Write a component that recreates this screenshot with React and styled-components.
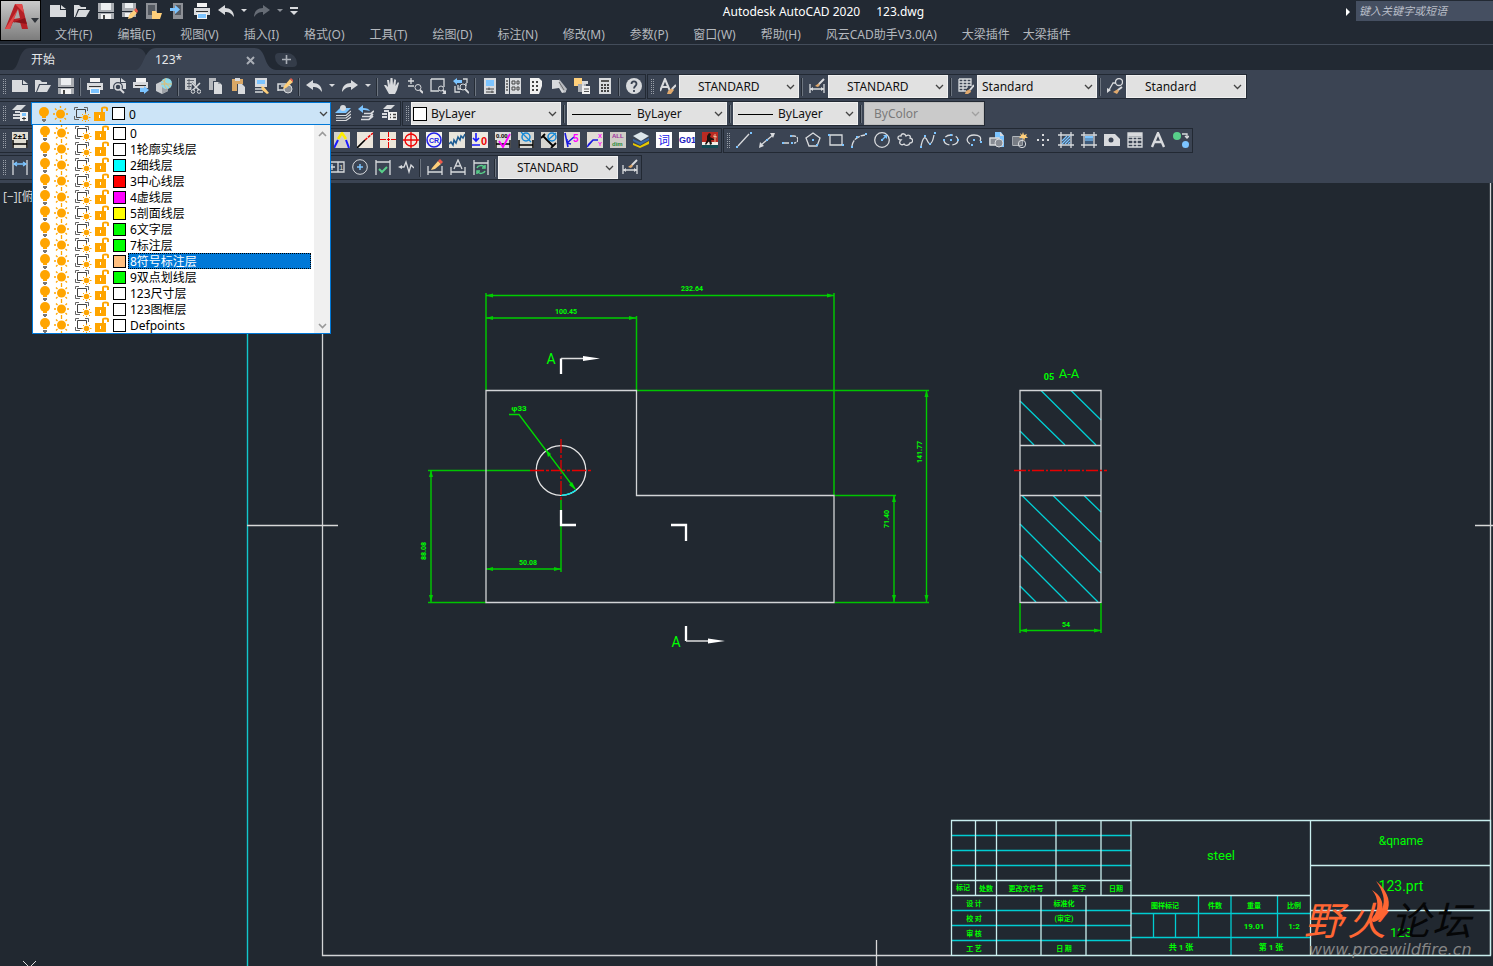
import React from "react";
import styled, { createGlobalStyle, css } from "styled-components";

const color = {
  chrome: "#222933",
  panel: "#3b4453",
  canvas: "#212830",
  field: "#e1e1e1",
  blue: "#0078d7",
  ink: "#d8dadd",
  sky: "#7cc4ff",
  amber: "#ffa500",
};

const GlobalStyle = createGlobalStyle`
  *, *::before, *::after { box-sizing: border-box; }
  body {
    margin: 0;
    background: ${color.canvas};
    font: 12px/16px "Noto Sans", "Noto Sans CJK SC", sans-serif;
    color: #fff;
    overflow-x: hidden;
  }
  button, input, select { font: inherit; color: inherit; margin: 0; }
`;

/* ---------- icon drawings, 16 x 16 ---------- */

const W = color.ink;
const B = color.sky;
const O = "#ffcf7a";
const D = color.panel;

const L = ({ d, c = W, w = 1.3, ...rest }) => (
  <path d={d} fill="none" stroke={c} strokeWidth={w} {...rest} />
);
const F = ({ d, c = W }) => <path d={d} fill={c} />;
const Dots = ({ at, c = B }) =>
  at.map(([x, y]) => <rect key={`${x}-${y}`} x={x} y={y} width="2" height="2" fill={c} />);

const icons = {
  new: <><F d="M0 2H10V7H16V14H0Z" /><F d="M11 2L16 6H11Z" /></>,
  open: <><F d="M0 2H5L7 4H12V6H4L1 14H0Z" /><F d="M5 7H16L12 14H2Z" /></>,
  save: <><F d="M0 0H16V16H0Z" c="#a9acb1" /><F d="M3 0H13V7H3Z" c="#eceef0" /><F d="M0 9H16V10H0Z" c="#222933" /><F d="M3 11H13V16H3Z" c="#f2f2f2" /><F d="M5 12H7V16H5Z" c="#444" /></>,
  saveAs: <><F d="M0 0H14V14H0Z" c="#a9acb1" /><F d="M3 0H11V5H3Z" c="#eceef0" /><F d="M0 8H14V9H0Z" c="#222933" /><F d="M3 10H8V14H3Z" c="#f2f2f2" /><F d="M7 12L12 7L15 10L10 15L6 16Z" c={O} /><F d="M12 7L14 5L16 8L15 10Z" c="#f0594a" /></>,
  mobileOpen: <><F d="M0 0H11V16H0Z" c="#8d9096" /><F d="M2 2H9V12H2Z" c="#555a62" /><F d="M6 8H10L11 10H16L14 16H6Z" c={O} /></>,
  mobileSave: <><F d="M3 0H13V16H3Z" c="#8d9096" /><F d="M5 2H11V12H5Z" c="#555a62" /><F d="M0 5H5V2L10 6.500L5 11V8H0Z" c={B} /></>,
  print: <><F d="M3 0H13V4H3Z" c="#f2f2f2" /><F d="M0 5H16V12H0Z" /><F d="M2 8H14V9H2Z" c="#333" /><F d="M3 10H13V16H3Z" c="#f2f2f2" /><F d="M4 11H12V15H4Z" c={B} /></>,
  undo: <F d="M0 7L7 2V5C12 5 16 8 16 14C13 10 11 9 7 9V12Z" />,
  redo: <F d="M16 7L9 2V5C4 5 0 8 0 14C3 10 5 9 9 9V12Z" />,
  redoOff: <F d="M16 7L9 2V5C4 5 0 8 0 14C3 10 5 9 9 9V12Z" c="#666c75" />,
  preview: <><F d="M0 0H10V5H16V11H0Z" /><F d="M11 0L16 4H11Z" /><circle cx="8" cy="9" r="4" fill={D} stroke={D} strokeWidth="2" /><circle cx="8" cy="9" r="3" fill={D} stroke={W} strokeWidth="1.500" /><L d="M10 11L14 15" w={2} /></>,
  publish: <><F d="M3 0H13V4H3Z" c="#f2f2f2" /><F d="M0 4H15V10H0Z" /><F d="M2 7H13V8H2Z" c="#333" /><F d="M7 10H11V8L16 12L11 16V14H7Z" c={B} /></>,
  globe: <><F d="M0 6L6 3L12 7V13L6 16L0 13Z" c="#c9ccd0" /><F d="M6 9L12 7V13L6 16Z" c="#9da1a7" /><circle cx="10.500" cy="5.500" r="5.500" fill="#8fd9e8" /><L d="M5 6H16M10 0C7 4 8 8 11 11M6 2C10 5 13 8 14 10" c="#e8b96a" w={0.9} /></>,
  cut: <><F d="M0 0H11V12H0Z" c="#c9ccd0" /><L d="M2 2.500H9M2 5.500H7M2 8.500H6M4 1V11" c="#555b66" w={0.9} /><F d="M7 4L16 12V16H6Z" c={D} /><L d="M7 5L14 12M15 5L8 12" w={1.600} /><circle cx="8" cy="13.500" r="1.800" fill="none" stroke={W} /><circle cx="14" cy="13.500" r="1.800" fill="none" stroke={W} /></>,
  copy: <><F d="M1 0H8V3H5V12H1Z" c="#b4b7bc" /><F d="M6 4H11L14 7V16H6Z" /><L d="M5 3.500H11V6" c={D} w={0.8} /></>,
  paste: <><F d="M1 1H12V6H6V13H1Z" c="#d9a766" /><F d="M4 0H9V3H4Z" /><F d="M7 6H11L14 9V16H7Z" /></>,
  match: <><F d="M1 0H13V9H1Z" /><F d="M3 2H11V6H3Z" c={B} /><L d="M1 11H8M1 14H9" /><F d="M7 8L10 9L15 15L13 16L8 12Z" c={O} /></>,
  blockEdit: <><L d="M1 13V6H9M1 12H8M4 8H8" w={1.500} /><circle cx="11" cy="11" r="4" fill="#888c93" stroke={W} /><F d="M7 8L13 1L16 4L9 10L6 11Z" c={O} /><F d="M13 1L14 0L16 2V4Z" c="#f0594a" /></>,
  pan: <F d="M5 16L1 9L0 7L2 7L4 9L3 2L5 2L6 7L6.500 0H8.500L9 7L10.500 1L12 2L11.500 8L14 4L15 5L13 12L11 16Z" />,
  zoomRt: <><L d="M1 3H7M4 0V6M1 8H7" /><circle cx="11" cy="9.500" r="3" fill="none" stroke={W} /><L d="M13 12L16 15" w={2} /></>,
  zoomWin: <><L d="M1 1H14V9M9 13H1V1" /><circle cx="11" cy="10.500" r="2.500" fill="none" stroke={W} /><L d="M13 12L15 15" w={2} /><F d="M12 16H16V12Z" /></>,
  zoomPrev: <><F d="M0 3L4 0V2H9V5H4V7Z" c={B} /><L d="M10 1H14V5M2 8V14H7M5 7V11H8M13 5V8" /><circle cx="10" cy="9" r="3" fill="none" stroke={W} /><L d="M12 11L16 15" w={1.800} /></>,
  props: <><F d="M2 0H14V16H2Z" /><F d="M4 2H12V8H4Z" c={B} /><L d="M4 11H12M4 14H12M7 9.500V12M10 12.500V15" c="#444" w={1} /></>,
  design: <><F d="M0 0H4V16H0ZM5 0H16V16H5Z" /><L d="M1 3H3M1 6H3M1 9H3M1 12H3" c="#555" /><L d="M7 3H10V6H7ZM12 3H14V6H12ZM7 9H10V12H7ZM12 9H14V12H12Z" c="#444" w={1} /></>,
  palettes: <><F d="M2 0H11L14 3V8L11 16H2Z" c="#f0f0f0" /><F d="M4 3H6V5H4ZM8 3H10V5H8ZM4 7H6V9H4ZM8 7H10V9H8ZM4 11H6V13H4ZM8 11H10V13H8Z" c="#444" /></>,
  sheetSet: <><F d="M1 2H8L15 12V14L11 15L8 10L1 11Z" /><F d="M8 1L16 11L14 15L9 9Z" c="#b8bbc0" /><L d="M8 4L13 12" c="#555" w={0.8} /></>,
  markup: <><F d="M0 0H8V8H0Z" c={O} /><F d="M4 6H12V14H4Z" c="#a9acb1" /><F d="M8 8H16V16H8Z" c="#f0f0f0" /><F d="M8 3H14V6H10V8H8Z" /><L d="M10 11H15M10 13.500H15" c="#555" w={1} /></>,
  calc: <><F d="M2 0H14V16H2Z" /><F d="M4 2H12V4H4Z" c="#555" /><F d="M4 6H6V8H4ZM7 6H9V8H7ZM10 6H12V8H10ZM4 9H6V11H4ZM7 9H9V11H7ZM10 9H12V11H10ZM4 12H6V14H4ZM7 12H9V14H7ZM10 12H12V14H10Z" c="#444" /></>,
  help: <><circle cx="8" cy="8" r="8" fill={W} /><L d="M5.500 6C5.500 2.500 10.500 2.500 10.500 6C10.500 8 8 8 8 10.500M8 12V14" c="#3b4453" w={1.800} /></>,
  textStyle: <><L d="M0 13L5 1L10 13M2 9H8" w={2} /><F d="M8 13L12 10L14 12L11 16H7Z" c="#e0a96d" /><L d="M12 11L16 7" w={2} /></>,
  dimStyle: <><L d="M1 6V15M15 6V15M1 11H15" /><F d="M1 11L4 9V13ZM15 11L12 9V13Z" /><F d="M6 8L10 5L11 7L9 9Z" c="#e0a96d" /><L d="M10 6L15 1" w={2} /></>,
  tableStyle: <><L d="M1 1H13V8M8 13H1V1M1 4H13M1 7H13M1 10H9M5 1V13M9 1V10" /><F d="M8 13L12 11L13 14L10 16H7Z" c="#e0a96d" /><L d="M12 12L16 7" w={2} /></>,
  leaderStyle: <><circle cx="12" cy="4" r="3.500" fill="none" stroke={W} strokeWidth="1.300" /><L d="M9 5L6 5L2 12" /><F d="M0 15V10L4 12Z" /><F d="M6 14L11 11L12 13L10 16Z" c="#e0a96d" /><L d="M11 12L15 9" w={2} /></>,
  layers: <><F d="M5 0H14L9 5H0Z" /><L d="M3 7H8M1 10H8M1 13H8" w={2} /><F d="M8 7H16V16H8Z" c="#f0f0f0" /><F d="M10 8H14V11H10Z" c={B} /><L d="M10 13.500H14M12 12V15.500" c="#333" w={1} /></>,
  makeCurrent: <><F d="M5 3H16L11 8H0Z" c={B} /><circle cx="8" cy="3" r="3" fill={W} /><L d="M1 10.500H11L16 6M1 13H11L16 9M1 15.500H11L16 12" w={1.200} /></>,
  layerPrev: <><F d="M0 4L5 0V3C9 3 11 4 12 6C9 5 7 5 5 5V8Z" c={B} /><L d="M6 8.500H13L16 6M4 11.500H12L15 9M3 14.500H11L15 11" w={1.700} /></>,
  layerStates: <><F d="M6 0H14L10 4H2Z" /><L d="M3 6H8M1 9H6M1 12H6" w={2} /><F d="M7 7H16V15H7Z" c="#f0f0f0" /><L d="M9 9.500H10M12 9.500H15M9 12.500H10M12 12.500H15" c="#444" /></>,
  // annotation plug-in
  tol: <><F d="M0 0H16V16H0Z" c="#e0ddd2" /><text x="1" y="7" fontSize="8" fontWeight="700" fill="#000">2±1</text><L d="M1 8V16M15 8V16M1 12H15" c="#000" w={1.500} /></>,
  vee: <><F d="M0 0H16V16H0Z" c="#d5d2c9" /><L d="M4 7L8 1L12 7" c="#ffee00" w={2.500} /><L d="M4 8L0 16M12 8L15 16" c="#1a1aff" w={2} /></>,
  diag: <><F d="M0 0H16V16H0Z" c="#ece6dc" /><L d="M0 16L8 8" c="#000" w={1.600} /><L d="M8 8L16 1" c="#e00" w={1.500} strokeDasharray="3 1" /></>,
  cross: <><F d="M0 0H16V16H0Z" c="#ece6d8" /><L d="M0 7.500H6M7 7.500H10M11 7.500H16M8.500 0V5M8.500 6V9M8.500 10V16" c="#e00" w={1} /></>,
  target: <><F d="M0 0H16V16H0Z" c="#f0e8de" /><circle cx="8" cy="8" r="6" fill="none" stroke="#e00" strokeWidth="1.300" /><L d="M0 8H16M8 0V16" c="#e00" w={1.300} /></>,
  cr: <><F d="M0 0H16V16H0Z" c="#f5f3f0" /><circle cx="8" cy="8" r="7" fill="none" stroke="#2222e8" strokeWidth="1.600" /><text x="8" y="11" fontSize="7" fontWeight="700" textAnchor="middle" fill="#2222e8">CR</text></>,
  wave: <><F d="M0 0H16V16H0Z" c="#e8e5dc" /><L d="M0 12L2 10L4 13L5 8L7 11L9 5L11 8L12 4L14 6L16 2" c="#1d5c93" w={1.500} /></>,
  datum: <><F d="M0 0H16V16H0Z" c="#ede9e0" /><L d="M4 1V9M1 6L4 9L7 6M0 13H8" c="#1a1aff" w={1.600} /><text x="9" y="13" fontSize="11" fontWeight="700" fill="#e00">0</text></>,
  rough: <><F d="M0 0H16V16H0Z" c="#ddd" /><text x="1" y="6" fontSize="6" fontWeight="700" fill="#000">0.00</text><L d="M1 8V16M15 8V16M1 12H15" c="#000" /><L d="M4 9L8 15L15 2" c="#f0f" w={1.800} /></>,
  dimDia: <><F d="M0 0H16V16H0Z" c="#d5d5d0" /><circle cx="8" cy="5" r="4" fill="none" stroke="#1689d8" strokeWidth="1.500" /><L d="M3 0L13 10" c="#1689d8" /><L d="M1 8V16M15 8V16M1 13H15" c="#000" w={1.500} /></>,
  dimAlign: <><F d="M0 0H16V16H0Z" c="#d5d5d0" /><circle cx="11" cy="5" r="4" fill="none" stroke="#1689d8" strokeWidth="1.500" /><L d="M2 4L12 14M0 6L4 2M10 16L15 11" c="#000" w={1.800} /><L d="M7 8L15 1" c="#1689d8" /></>,
  lead5: <><F d="M0 0H16V16H0Z" c="#e3dfd8" /><L d="M1 1L4 15M3 11L10 5M3 11V7M3 11L7 12" c="#1a1ae0" w={1.600} /><text x="9" y="10" fontSize="10" fontWeight="700" fill="#f0f">5</text></>,
  xy: <><F d="M0 0H16V16H0Z" c="#e0dcd4" /><L d="M0 15L6 8H11M1 13L6 8" c="#1a1ae0" w={1.500} /><text x="11" y="6" fontSize="6" fontWeight="700" fill="#f0f">X</text><text x="11" y="14" fontSize="6" fontWeight="700" fill="#f0f">Y</text></>,
  all: <><F d="M0 0H16V16H0Z" c="#cfccc6" /><text x="2" y="6" fontSize="6" fontWeight="700" fill="#a030a0">ALL</text><text x="2" y="14" fontSize="6" fontWeight="700" fill="#2a8a3a">dim</text></>,
  stack: <><F d="M0 11L7 14L16 9V12L7 16L0 13Z" c="#e8c800" /><F d="M0 7L7 10L16 6V8L7 13L0 9Z" c="#3c68a8" /><F d="M0 4L8 0L16 4L8 9Z" c="#dce5ea" /></>,
  word: <><F d="M0 0H16V16H0Z" c="#fff" /><text x="2" y="13" fontSize="12" fill="#2222e8">词</text></>,
  go1: <><F d="M0 0H16V16H0Z" c="#fff" /><text x="0" y="11" fontSize="9" fontWeight="700" fontFamily="Liberation Mono, monospace" fill="#2222c0">G01</text></>,
  pirate: <><F d="M0 0H16V16H0Z" c="#b92a22" /><F d="M0 10H16V13H0Z" c="#f0efe9" /><F d="M7 1L9 2L8 5L12 7L12 8L9 8L10 12L8 13L7 9L4 13L3 12L5 8L5 4Z" c="#19130f" /><F d="M0 13H16V16H0Z" c="#124c53" /><L d="M13 2V11M11 4L15 5" c="#f0d9b0" w={0.8} /></>,
  // drawing tools
  line: <><L d="M2 14L13 2" /><Dots at={[[0, 14], [14, 0]]} /></>,
  xline: <><L d="M2 13L14 3" /><F d="M11 1H16L14 6ZM1 10L5 14L0 16Z" /><Dots at={[[7, 7]]} /></>,
  pline: <><L d="M2 11H8M9 4H12C17 4 17 11 12 11" strokeDasharray="5 1" /><Dots at={[[0, 10], [9, 10], [8, 3]]} /></>,
  polygon: <><L d="M8 1L15 6L12 14H4L1 6Z" /><Dots at={[[7, 7], [11, 12]]} /></>,
  rect: <><L d="M2 3H14V13H2Z" /><Dots at={[[0, 2], [14, 12]]} /></>,
  arc: <><L d="M1 14C2 8 6 4 14 3" strokeDasharray="6 1" /><Dots at={[[0, 14], [5, 4], [14, 1]]} /></>,
  circle: <><circle cx="8" cy="8" r="7.300" fill="none" stroke={W} strokeWidth="1.300" /><L d="M8 8L12 4" c={B} /><F d="M9 3H13V7Z" c={B} /><Dots at={[[7, 7]]} /></>,
  cloud: <L d="M4 8C0 8 0 3 4 4C4 1 8 1 9 4C12 2 14 4 13 6C17 7 16 11 13 11C12 14 8 14 7 12C4 14 1 11 4 8Z" />,
  spline: <><L d="M1 14C3 5 5 4 7 8C9 13 12 14 14 3" /><Dots at={[[0, 14], [4, 3], [9, 11], [14, 0]]} /></>,
  ellipse: <><ellipse cx="8" cy="8" rx="7" ry="5" fill="none" stroke={W} strokeWidth="1.300" strokeDasharray="8 3" /><Dots at={[[0, 7], [14, 7], [7, 2], [7, 7]]} /></>,
  ellArc: <><L d="M4 12C-1 9 1 3 8 3C13 3 16 5 14 9" /><Dots at={[[7, 7], [14, 9], [5, 12]]} /></>,
  insert: <><F d="M6 0H12L15 4V15H8V7H6Z" c={B} /><F d="M0 6H10V13H0Z" c="#888c93" /><L d="M1 6H10V13H1Z" /><circle cx="10" cy="11" r="4" fill="#888c93" stroke={W} /><F d="M11 0L15 4H11Z" /></>,
  block: <><L d="M1 5H10V13H1Z" /><F d="M1 5H10V13H1Z" c="#777c84" /><circle cx="10" cy="12" r="3.700" fill="none" stroke={W} /><F d="M11 0L12 3L15 2L14 4L16 6L13 6L12 9L11 6L7 6L9 4L8 1L10 3Z" c={O} /></>,
  point: <Dots at={[[7, 2], [7, 7], [7, 12], [2, 7], [12, 7]]} c={W} />,
  hatch: <><L d="M0 3H16M0 13H16M3 0V16M13 0V16" /><L d="M4 9L9 4M4 12L12 4M7 12L12 7M10 12L12 10" c={B} /></>,
  gradient: <><F d="M4 4H12V12H4Z" c="#3f5a78" /><F d="M4 4H12V6H4Z" c={B} /><F d="M4 6H12V9H4Z" c="#6399c8" /><L d="M0 3H16M0 13H16M3 0V16M13 0V16" /></>,
  region: <><F d="M0 2H11L16 7V14H0Z" /><circle cx="7" cy="8" r="2.500" fill={D} /></>,
  table: <><L d="M1 1H15V15H1ZM1 5H15M1 8H15M1 12H15M6 5V15M10 5V15" /><F d="M1 1H15V4H1Z" /></>,
  mtext: <L d="M2 15L8 1L14 15M4 10H12" w={2.400} />,
  addSel: <><circle cx="4" cy="4" r="4" fill="#58d08a" /><circle cx="12.500" cy="12.500" r="3.500" fill={B} /><L d="M9 2H14V6M12 4L14 6L16 4" /></>,
  // dimension tools
  dimLin: <><L d="M1 1V16M15 1V16" /><L d="M2 5H14M5 3L2 5L5 7M11 3L14 5L11 7" c={B} /></>,
  tolerance: <><L d="M0 3H15V13H0M9 3V13M0 8H6M3 5V11" /><text x="10" y="11" fontSize="8" fill={W}>1</text></>,
  center: <><circle cx="8" cy="8" r="7.300" fill="none" stroke={W} /><L d="M8 5V11M5 8H11" c={B} w={1.500} /></>,
  inspect: <><L d="M1 1V16M15 1V16M1 3H15" /><L d="M4 10L7 13L12 8" c="#58d08a" w={2} /></>,
  jog: <><L d="M3 8H6L8 3L11 13L13 6L16 9" /><F d="M0 8L4 6V10Z" /></>,
  dimEdit: <><L d="M1 7V16M15 7V16M1 13H15" /><F d="M5 9L11 2L14 5L8 10L4 11Z" c={O} /><F d="M11 2L13 0L16 3L14 5Z" c="#f0594a" /></>,
  dimText: <L d="M1 8V16M15 8V16M1 13H15M4 10L8 1L12 10M6 7H10" />,
  dimUpdate: <><L d="M1 1V16M15 1V16M1 4H15" /><L d="M4 9C5 6 10 6 11 8M12 6V9H9M12 12C11 15 6 15 5 13M4 15V12H7" c="#58d08a" w={1.500} /></>,
};

const IconSvg = styled.svg`
  display: block;
  width: 16px;
  height: 16px;
  flex: none;
  text { font-family: "Liberation Sans", "Noto Sans CJK SC", sans-serif; }
`;

const Icon = ({ name }) => (
  <IconSvg viewBox="0 0 16 16" aria-hidden="true">{icons[name]}</IconSvg>
);

/* ---------- title bar ---------- */

const Header = styled.header`
  display: flex;
  height: 45px;
  background: ${color.chrome};
  border-bottom: 1px solid #434c5a;
`;

const AppButton = styled.button`
  flex: none;
  width: 41px;
  height: 41px;
  padding: 0;
  border: 1px solid #000;
  background: linear-gradient(#c9c9c9, #7c7c7c);
`;

const HeaderBody = styled.div`
  flex: 1;
  min-width: 0;
`;

const QuickRow = styled.div`
  display: flex;
  align-items: center;
  height: 24px;
`;

const QuickTools = styled.div`
  display: flex;
  padding-left: 5px;
`;

const ToolButton = styled.button`
  display: flex;
  align-items: center;
  justify-content: center;
  flex: none;
  width: ${(p) => p.$w || 23}px;
  height: 20px;
  padding: 0;
  margin-bottom: 2px;
  border: 0;
  background: transparent;
`;

const Title = styled.h1`
  flex: 1;
  display: flex;
  justify-content: center;
  gap: 16px;
  margin: 0;
  font-size: 12px;
  font-weight: 400;
  white-space: nowrap;
`;

const Search = styled.div`
  display: flex;
  align-items: center;
  gap: 6px;
  height: 24px;
  width: 148px;
`;

const SearchInput = styled.input`
  flex: 1;
  min-width: 0;
  height: 20px;
  margin-bottom: 3px;
  padding: 0 3px;
  border: 0;
  background: #454f61;
  font-size: 11px;
  font-style: italic;
  &::placeholder { color: #b9bec8; opacity: 1; }
`;

const MenuBar = styled.nav`
  display: flex;
  align-items: center;
  gap: 25px;
  height: 20px;
  padding: 2px 0 0 14px;
`;

const MenuLink = styled.a`
  color: #b4b8be;
  text-decoration: none;
  white-space: nowrap;
  & + &:last-child { margin-left: -12px; }
`;

const menus = ["文件(F)", "编辑(E)", "视图(V)", "插入(I)", "格式(O)", "工具(T)", "绘图(D)", "标注(N)", "修改(M)", "参数(P)", "窗口(W)", "帮助(H)", "风云CAD助手V3.0(A)", "大梁插件", "大梁插件"];

const Arrow = ({ off, w = 13 }) => (
  <ToolButton $w={w} aria-label="更多">
    <svg width="8" height="6" viewBox="0 0 8 6"><path d="M1 1H7L4 4Z" fill={off ? "#8a8f97" : W} /></svg>
  </ToolButton>
);

const quick = ["new", "open", "save", "saveAs", "mobileOpen", "mobileSave", "print", "undo"];

/* ---------- file tabs ---------- */

const TabStrip = styled.div`
  display: flex;
  align-items: flex-end;
  height: 25px;
  padding-left: 12px;
  background: ${color.chrome};
`;

const Tab = styled.div`
  display: flex;
  align-items: center;
  flex: none;
  height: 22px;
  width: ${(p) => (p.$active ? 140 : 138)}px;
  margin-left: ${(p) => (p.$active ? -14 : 0)}px;
  padding: 2px 21px 0 19px;
  justify-content: space-between;
  background: ${(p) => (p.$active ? color.panel : "#323946")};
  ${(p) => p.$active
    ? css`clip-path: path("M0 22C8 20 8 0 20 0H118C132 0 126 20 140 22Z");`
    : css`clip-path: path("M0 22C8 20 6 0 18 0H124C132 0 134 4 138 22Z");`}
`;

const TabName = styled.button`
  padding: 0;
  border: 0;
  background: none;
  color: #e6e8ea;
`;

const TabClose = styled.button`
  display: flex;
  padding: 0;
  border: 0;
  background: none;
`;

const AddTab = styled.button`
  align-self: center;
  display: flex;
  align-items: center;
  justify-content: center;
  width: 22px;
  height: 14px;
  margin: 4px 0 0 -1px;
  padding: 0;
  border: 0;
  border-radius: 4px 10px 4px 10px;
  background: #343c49;
`;

/* ---------- toolbars ---------- */

const ToolArea = styled.div`
  display: flex;
  flex-direction: column;
  gap: 2px;
  height: 113px;
  padding-top: 4px;
  background: ${color.panel};
`;

const ToolRow = styled.div`
  display: flex;
  gap: 1px;
`;

const ToolBar = styled.div`
  display: flex;
  align-items: center;
  flex: none;
  height: 25px;
  border: 1px solid ${color.chrome};
  border-left-width: ${(p) => (p.$first ? 0 : 1)}px;
`;

const Grip = styled.span`
  flex: none;
  width: 8px;
  height: 15px;
  background:
    repeating-linear-gradient(#9aa0a9 0 1px, transparent 1px 2px) 3px 0 / 1px 15px no-repeat,
    repeating-linear-gradient(#9aa0a9 0 1px, transparent 1px 2px) 5px 0 / 1px 15px no-repeat;
`;

const Divider = styled.span`
  flex: none;
  width: 2px;
  height: 18px;
  margin: 0 2px;
  background: #252c36;
  border-right: 1px solid #6d7580;
`;

const Spacer = styled.span`
  flex: none;
  width: ${(p) => p.$w}px;
`;

const SelectBox = styled.span`
  position: relative;
  flex: none;
  width: ${(p) => p.$w}px;
  height: 23px;
`;

const Select = styled.select`
  appearance: none;
  width: 100%;
  height: 100%;
  padding: 1px 16px 0 ${(p) => p.$pad}px;
  border: 1px solid #f0f0f0;
  border-radius: 0;
  background: ${color.field};
  color: #111;
  &:disabled { background: #cacaca; border-color: #bcbcbc; color: #7a7a7a; opacity: 1; }
`;

const Overlay = styled.svg`
  position: absolute;
  ${(p) => (p.$side === "right" ? "right: 4px;" : "left: 2px;")}
  top: 4px;
  pointer-events: none;
`;

const Combo = ({ label, value, w = 120, pad = 18, disabled, children }) => (
  <SelectBox $w={w}>
    <Select aria-label={label} $pad={pad} disabled={disabled} defaultValue={value}>
      <option>{value}</option>
    </Select>
    {children && <Overlay width="62" height="16">{children}</Overlay>}
    <Overlay $side="right" width="9" height="16">
      <path d="M1 6L4.500 9.500L8 6" fill="none" stroke={disabled ? "#a0a0a0" : "#444"} strokeWidth="1.300" />
    </Overlay>
  </SelectBox>
);

const toolNames = {
  new: "新建", open: "打开", save: "保存", print: "打印", undo: "放弃", redo: "重做", help: "帮助",
};

const Tools = ({ list }) => list.map((name, i) => {
  if (name === "|") return <Divider key={i} />;
  if (name === "v") return <Arrow key={i} />;
  return <ToolButton key={i} aria-label={toolNames[name] || name}><Icon name={name} /></ToolButton>;
});

/* ---------- layer list ---------- */

const LayerPicker = styled.div`
  position: relative;
  flex: none;
  width: 300px;
  height: 23px;
  color: #000;
`;

const LayerCurrent = styled.button`
  display: flex;
  align-items: center;
  width: 100%;
  height: 23px;
  padding: 0 2px 0 6px;
  border: 1px solid ${color.blue};
  background: #cce4f7;
  text-align: left;
`;

const LayerPopup = styled.div`
  position: absolute;
  z-index: 5;
  top: 22px;
  left: 1px;
  display: flex;
  width: 299px;
  border: 1px solid ${color.blue};
  background: #fff;
`;

const LayerList = styled.ul`
  flex: 1;
  margin: 0;
  padding: 0;
  list-style: none;
`;

const LayerItem = styled.li`
  display: flex;
  align-items: center;
  height: 16px;
  padding: 0 3px 0 6px;
`;

const LayerName = styled.span`
  flex: 1;
  height: 16px;
  margin-left: 2px;
  padding: 1px 0 0 2px;
  line-height: 16px;
  white-space: nowrap;
  ${(p) => p.$selected && css`
    background: ${color.blue};
    color: #fff;
    outline: 1px dotted #000;
    outline-offset: -1px;
  `}
`;

const Swatch = styled.span`
  flex: none;
  width: 13px;
  height: 13px;
  border: 1px solid #000;
  background: ${(p) => p.$c};
`;

const ScrollTrack = styled.div`
  display: flex;
  flex-direction: column;
  justify-content: space-between;
  align-items: center;
  width: 16px;
  padding: 6px 0 4px;
  background: #f0f0f0;
`;

const StateSvg = styled.svg`
  display: block;
  flex: none;
`;

const LayerState = () => (
  <StateSvg width="74" height="16" viewBox="0 0 74 16" aria-hidden="true">
    <circle cx="6" cy="6" r="5" fill={color.amber} />
    <path d="M4 9H8V12H4Z" fill={color.amber} />
    <path d="M4 13H8V15H7V16H5V15H4Z" fill="#777" />
    <circle cx="22.500" cy="8" r="4.500" fill={color.amber} />
    <path d="M22.500 0V2M22.500 14V16M15 8H17M28 8H30M17 2.500L18.500 4M28 2.500L26.500 4M17 13.500L18.500 12M28 13.500L26.500 12" stroke={color.amber} strokeWidth="1.300" />
    <path d="M36.500 4V1.500H40M46 1.500H49.500V5M36.500 10V13.500H41" fill="none" stroke="#666" />
    <path d="M38.500 3.500H47.500V7M38.500 3.500V11.500H43" fill="none" stroke="#444" />
    <circle cx="47.500" cy="11.500" r="2.800" fill={color.amber} />
    <path d="M47.500 6.500V8M47.500 15V16M42.500 11.500H44M51 11.500H52.500M44 8L45 9M51 8L50 9M44 15L45 14M51 15L50 14" stroke={color.amber} />
    <path d="M56 6H67V15H56Z" fill={color.amber} />
    <path d="M64 6V2.500C64 1 69 1 69 2.500V5" fill="none" stroke={color.amber} strokeWidth="2" />
    <path d="M61 9H62V12H61Z" fill="#fff" />
  </StateSvg>
);

const layers = [
  ["0", "#fff"], ["1轮廓实线层", "#fff"], ["2细线层", "#0ff"], ["3中心线层", "#f00"],
  ["4虚线层", "#f0f"], ["5剖面线层", "#ff0"], ["6文字层", "#0f0"], ["7标注层", "#0f0"],
  ["8符号标注层", "#ffbf7f"], ["9双点划线层", "#0f0"], ["123尺寸层", "#fff"],
  ["123图框层", "#fff"], ["Defpoints", "#fff"],
];

const Chevron = ({ up, c = "#999", w = 1.6 }) => (
  <svg width="9" height="6" viewBox="0 0 9 6">
    <path d={up ? "M1 5L4.500 1.500L8 5" : "M1 1L4.500 4.500L8 1"} fill="none" stroke={c} strokeWidth={w} />
  </svg>
);

const LayerSelect = () => (
  <LayerPicker>
    <LayerCurrent aria-haspopup="listbox" aria-expanded="true">
      <LayerState />
      <Swatch $c="#fff" />
      <LayerName>0</LayerName>
      <Chevron c="#444" w={1.3} />
    </LayerCurrent>
    <LayerPopup>
      <LayerList role="listbox" aria-label="图层">
        {layers.map(([name, c], i) => (
          <LayerItem key={name} role="option" aria-selected={i === 8}>
            <LayerState />
            <Swatch $c={c} />
            <LayerName $selected={i === 8}>{name}</LayerName>
          </LayerItem>
        ))}
      </LayerList>
      <ScrollTrack><Chevron up /><Chevron /></ScrollTrack>
    </LayerPopup>
  </LayerPicker>
);

/* ---------- drawing ---------- */

const Canvas = styled.main`
  background: ${color.canvas};
  overflow: hidden;
`;

const Drawing = styled.svg`
  display: block;
  width: 100%;
  height: auto;
  text { font-family: "Roboto", "Noto Sans CJK SC", sans-serif; }
`;

const Note = ({ x, y, s = 7, v, children }) => (
  <text x={x} y={y} fontSize={s} fontWeight={s < 10 ? 700 : 400} fill="#0f0" textAnchor="middle" transform={v ? `rotate(-90 ${x} ${y})` : undefined}>
    {children}
  </text>
);

const green = "#00cc00";

const HDim = ({ x1, x2, y }) => (
  <g>
    <path d={`M${x1} ${y}H${x2}`} stroke={green} strokeWidth="1.300" />
    <path d={`M${x1} ${y}l7 -2v4ZM${x2} ${y}l-7 -2v4Z`} fill={green} />
  </g>
);

const VDim = ({ x, y1, y2 }) => (
  <g>
    <path d={`M${x} ${y1}V${y2}`} stroke={green} strokeWidth="1.400" />
    <path d={`M${x} ${y1}l-2 7h4ZM${x} ${y2}l-2 -7h4Z`} fill={green} />
  </g>
);

const Plan = () => (
  <g fill="none" strokeWidth="1.300">
    <path d="M486 390V293M636.500 390V316M834 495V293M636.500 390.500H929M834.500 495.500H896M834.500 602.500H929M530 470.500H428M486 602.500H428M561 500V572" stroke="#00c400" strokeWidth="1.500" />
    <HDim x1={486} x2={834} y={295.5} />
    <HDim x1={486} x2={636} y={318} />
    <HDim x1={486} x2={561} y={569} />
    <VDim x={431} y1={470} y2={602} />
    <VDim x={894} y1={495} y2={602} />
    <VDim x={926.500} y1={390} y2={602} />
    <path d="M486 390.500H636.500V495.500H834V602.500H486Z" stroke="#d2d4d6" />
    <circle cx="561" cy="470.500" r="24.800" stroke="#e4e4e4" />
    <path d="M561 495.300A24.800 24.800 0 0 0 576 490" stroke="#0ee" />
    <path d="M530 470.500H592M561 439V501" stroke="#e60000" strokeDasharray="14 2 3 2" />
    <path d="M509 414.500H519L575 489" stroke="#00d800" />
    <path d="M546 450L551 454L548 457ZM576 490L569 485L572 482Z" fill="#00e000" />
    <path d="M561 374V358.500M561 510V525H576M671 525H686V541M686 626V641" stroke="#fff" strokeWidth="2.300" />
    <path d="M561 358.500H584M686 641H709" stroke="#ddd" />
    <path d="M583 356V361L600 358.500ZM708 638.500V643.500L725 641Z" fill="#fff" />
  </g>
);

const Section = () => (
  <g fill="none" strokeWidth="1.300">
    <path d="M1020 401L1065 445M1020 431L1034 445M1041 390.500L1096 445M1071 390.500L1101 420M1022 495.500L1101 573M1053 495.500L1101 542M1084 495.500L1101 512M1020 524L1098 602M1020 555L1067 602M1020 586L1036 602" stroke="#00cfd4" />
    <path d="M1020 390.500H1101V602.500H1020ZM1020 445.500H1101M1020 495.500H1101" stroke="#d2d4d6" />
    <path d="M1014 470.500H1107" stroke="#e60000" strokeDasharray="12 2 2 2" />
    <path d="M1020 603V633M1101 603V633" stroke="#00c400" strokeWidth="1.500" />
    <HDim x1={1020} x2={1101} y={630.500} />
  </g>
);

const TitleBlock = () => (
  <g fill="none" strokeWidth="1.300">
    <path d="M951 835.500H1131M951 850.500H1131M951 865.500H1131M951 910.500H1131M951 925.500H1131M951 940.500H1131M1131 913.500H1310M1131 937.500H1310M1153.500 913V937M1175.500 913V937M1198.500 895V937M1231 895V955M1277.500 895V937" stroke="#00cdd2" />
    <path d="M951.500 820.500H1490.500V955.500H951.500ZM975.500 820V895M996.500 820V955M1056 820V895M1101 820V895M1131 820V955M951 880.500H1131M951 895.500H1310M1041 895V955M1086 895V955M1310.500 820V955M1310 865.500H1490M1310 910.500H1490" stroke="#c9eeee" />
  </g>
);

const notes = [
  [692, 291, 7, "232.64"], [566, 314, 7, "100.45"], [528, 565, 7, "50.08"], [519, 411, 8, "φ33"],
  [551, 364, 14, "A"], [676, 647, 14, "A"], [1049, 380, 9, "05"], [1069, 378, 13, "A-A"], [1066, 627, 7, "54"],
  [1221, 860, 13, "steel"], [1401, 845, 12, "&qname"], [1401, 891, 14, "123.prt"], [1401, 937, 13, "123"],
  [963, 890, 7, "标记"], [986, 891, 7, "处数"], [1026, 891, 7, "更改文件号"], [1079, 891, 7, "签字"], [1116, 891, 7, "日期"],
  [974, 906, 7, "设 计"], [974, 921, 7, "校 对"], [974, 936, 7, "审 核"], [974, 951, 7, "工 艺"],
  [1064, 906, 7, "标准化"], [1064, 921, 7, "(审定)"], [1064, 951, 7, "日 期"],
  [1165, 908, 7, "图样标记"], [1215, 908, 7, "件数"], [1254, 908, 7, "重量"], [1294, 908, 7, "比例"],
  [1254, 929, 8, "19.01"], [1294, 929, 8, "1:2"], [1181, 950, 8, "共 1 张"], [1271, 950, 8, "第 1 张"],
];

const Watermark = () => (
  <g fontStyle="italic">
    <g fontSize="39">
      <text x="1304" y="935" fill="#ff6633">野</text>
      <text x="1347" y="935" fill="#ff6633">火</text>
      <text x="1391" y="935" fill="#050607">论</text>
      <text x="1432" y="935" fill="#050607">坛</text>
    </g>
    <path d="M1376 881C1386 889 1391 900 1388 909C1386 916 1380 920 1374 922C1372 922 1371 920 1373 917C1379 910 1379 898 1372 890C1380 895 1384 902 1382 909C1386 900 1383 891 1376 881Z" fill="#ff6633" />
    <text x="1309" y="955" fontSize="16" fill="#858585" style={{ fontFamily: '"DejaVu Sans", sans-serif' }}>www.proewildfire.cn</text>
  </g>
);

export default function App() {
  return (
    <>
      <GlobalStyle />
      <Header>
        <AppButton aria-label="应用程序菜单">
          <svg width="39" height="39" viewBox="0 0 39 39">
            <path d="M4 28L14 3H21L27 28H21L19 21H12L9 28Z" fill="#b51f25" />
            <path d="M4 28L17 8L9 28ZM14 3H21L23 12Z" fill="#e14a4a" />
            <path d="M17 8L19 17L13 18Z" fill="#aaa" />
            <path d="M8 23L24 17L26 23L13 21Z" fill="#8b1118" />
            <path d="M30 17H38L34 22Z" fill="#30343a" />
          </svg>
        </AppButton>
        <HeaderBody>
          <QuickRow>
            <QuickTools>
              {quick.map((n) => (
                <ToolButton key={n} $w={24} aria-label={toolNames[n] || n}><Icon name={n} /></ToolButton>
              ))}
              <Arrow w={12} />
              <ToolButton $w={24} aria-label="重做"><Icon name="redoOff" /></ToolButton>
              <Arrow w={12} off />
              <ToolButton $w={16} aria-label="自定义快速访问工具栏">
                <svg width="10" height="8" viewBox="0 0 10 8"><path d="M1 0H9V2H1ZM1 4H9L5 8Z" fill={W} /></svg>
              </ToolButton>
            </QuickTools>
            <Title><span>Autodesk AutoCAD 2020</span><span>123.dwg</span></Title>
            <Search>
              <svg width="5" height="8" viewBox="0 0 5 8"><path d="M1 0L5 4L1 8Z" fill="#fff" /></svg>
              <SearchInput aria-label="搜索" placeholder="键入关键字或短语" />
            </Search>
          </QuickRow>
          <MenuBar>
            {menus.map((m, i) => <MenuLink key={i} href="#">{m}</MenuLink>)}
          </MenuBar>
        </HeaderBody>
      </Header>

      <TabStrip>
        <Tab><TabName>开始</TabName></Tab>
        <Tab $active>
          <TabName>123*</TabName>
          <TabClose aria-label="关闭">
            <svg width="9" height="9" viewBox="0 0 9 9"><path d="M1 1L8 8M8 1L1 8" stroke="#a9aeb6" strokeWidth="2" /></svg>
          </TabClose>
        </Tab>
        <AddTab aria-label="新图形">
          <svg width="9" height="9" viewBox="0 0 9 9"><path d="M4.500 0V9M0 4.500H9" stroke="#a9aeb6" strokeWidth="1.600" /></svg>
        </AddTab>
      </TabStrip>

      <ToolArea>
        <ToolRow>
          <ToolBar $first>
            <Grip />
            <Tools list={["new", "open", "save", "|", "print", "preview", "publish", "globe", "|", "cut", "copy", "paste", "match", "blockEdit", "|", "undo", "v", "redo", "v", "|", "pan", "zoomRt", "zoomWin", "zoomPrev", "|", "props", "design", "palettes", "sheetSet", "markup", "calc", "|", "help"]} />
          </ToolBar>
          <ToolBar>
            <Grip />
            <Tools list={["textStyle"]} />
            <Combo label="文字样式" value="STANDARD" />
            <Tools list={["|", "dimStyle"]} />
            <Combo label="标注样式" value="STANDARD" />
            <Tools list={["|", "tableStyle"]} />
            <Combo label="表格样式" value="Standard" pad={4} />
            <Tools list={["|", "leaderStyle"]} />
            <Combo label="多重引线样式" value="Standard" />
          </ToolBar>
        </ToolRow>
        <ToolRow>
          <ToolBar $first>
            <Grip />
            <Tools list={["layers"]} />
            <LayerSelect />
            <Tools list={["makeCurrent", "layerPrev", "layerStates"]} />
          </ToolBar>
          <ToolBar>
            <Grip />
            <Combo label="颜色" value="ByLayer" w={150} pad={19}>
              <rect x="0.500" y="1.500" width="13" height="13" fill="#fff" stroke="#000" />
            </Combo>
            <Divider />
            <Combo label="线型" value="ByLayer" w={160} pad={69}>
              <path d="M3 8.500H62" stroke="#000" />
            </Combo>
            <Divider />
            <Combo label="线宽" value="ByLayer" w={125} pad={44}>
              <path d="M3 8.500H38" stroke="#000" />
            </Combo>
            <Divider />
            <Combo label="打印样式" value="ByColor" pad={9} disabled />
          </ToolBar>
        </ToolRow>
        <ToolRow>
          <ToolBar $first>
            <Grip />
            <Tools list={["tol"]} />
            <Spacer $w={299} />
            <Tools list={["vee", "diag", "cross", "target", "cr", "wave", "datum", "rough", "dimDia", "dimAlign", "lead5", "xy", "all", "stack", "word", "go1", "pirate"]} />
          </ToolBar>
          <ToolBar>
            <Grip />
            <Tools list={["line", "xline", "pline", "polygon", "rect", "arc", "circle", "cloud", "spline", "ellipse", "ellArc", "insert", "block", "point", "hatch", "gradient", "region", "table", "mtext", "addSel"]} />
          </ToolBar>
        </ToolRow>
        <ToolRow>
          <ToolBar $first>
            <Grip />
            <Tools list={["dimLin"]} />
            <Spacer $w={294} />
            <Tools list={["tolerance", "center", "inspect", "jog", "|", "dimEdit", "dimText", "dimUpdate", "|"]} />
            <Combo label="标注样式" value="STANDARD" />
            <Tools list={["dimStyle"]} />
          </ToolBar>
        </ToolRow>
      </ToolArea>

      <Canvas>
        <Drawing viewBox="0 183 1493 783" role="img" aria-label="123.dwg">
          <text x="3" y="201" fontSize="12" fill="#d4d4d4" style={{ fontFamily: '"Noto Sans", "Noto Sans CJK SC", sans-serif' }}>[−][俯视]</text>
          <path d="M247.500 300V966" stroke="#12c8cc" strokeWidth="1.400" />
          <path d="M322.500 300V955.500H951M1490.500 183V955" fill="none" stroke="#d2d4d6" strokeWidth="1.300" />
          <path d="M247 525.500H338M1475 525.500H1493M876.500 940V966" stroke="#d8d8d8" strokeWidth="1.300" />
          <path d="M23 961L28 966M36 961L31 966" stroke="#ddd" />
          <Plan />
          <Section />
          <TitleBlock />
          {notes.map(([x, y, s, t], i) => <Note key={i} x={x} y={y} s={s}>{t}</Note>)}
          <Note x={426} y={551} v>88.08</Note>
          <Note x={922} y={452} v>141.77</Note>
          <Note x={889} y={519} v>71.40</Note>
          <Watermark />
        </Drawing>
      </Canvas>
    </>
  );
}
